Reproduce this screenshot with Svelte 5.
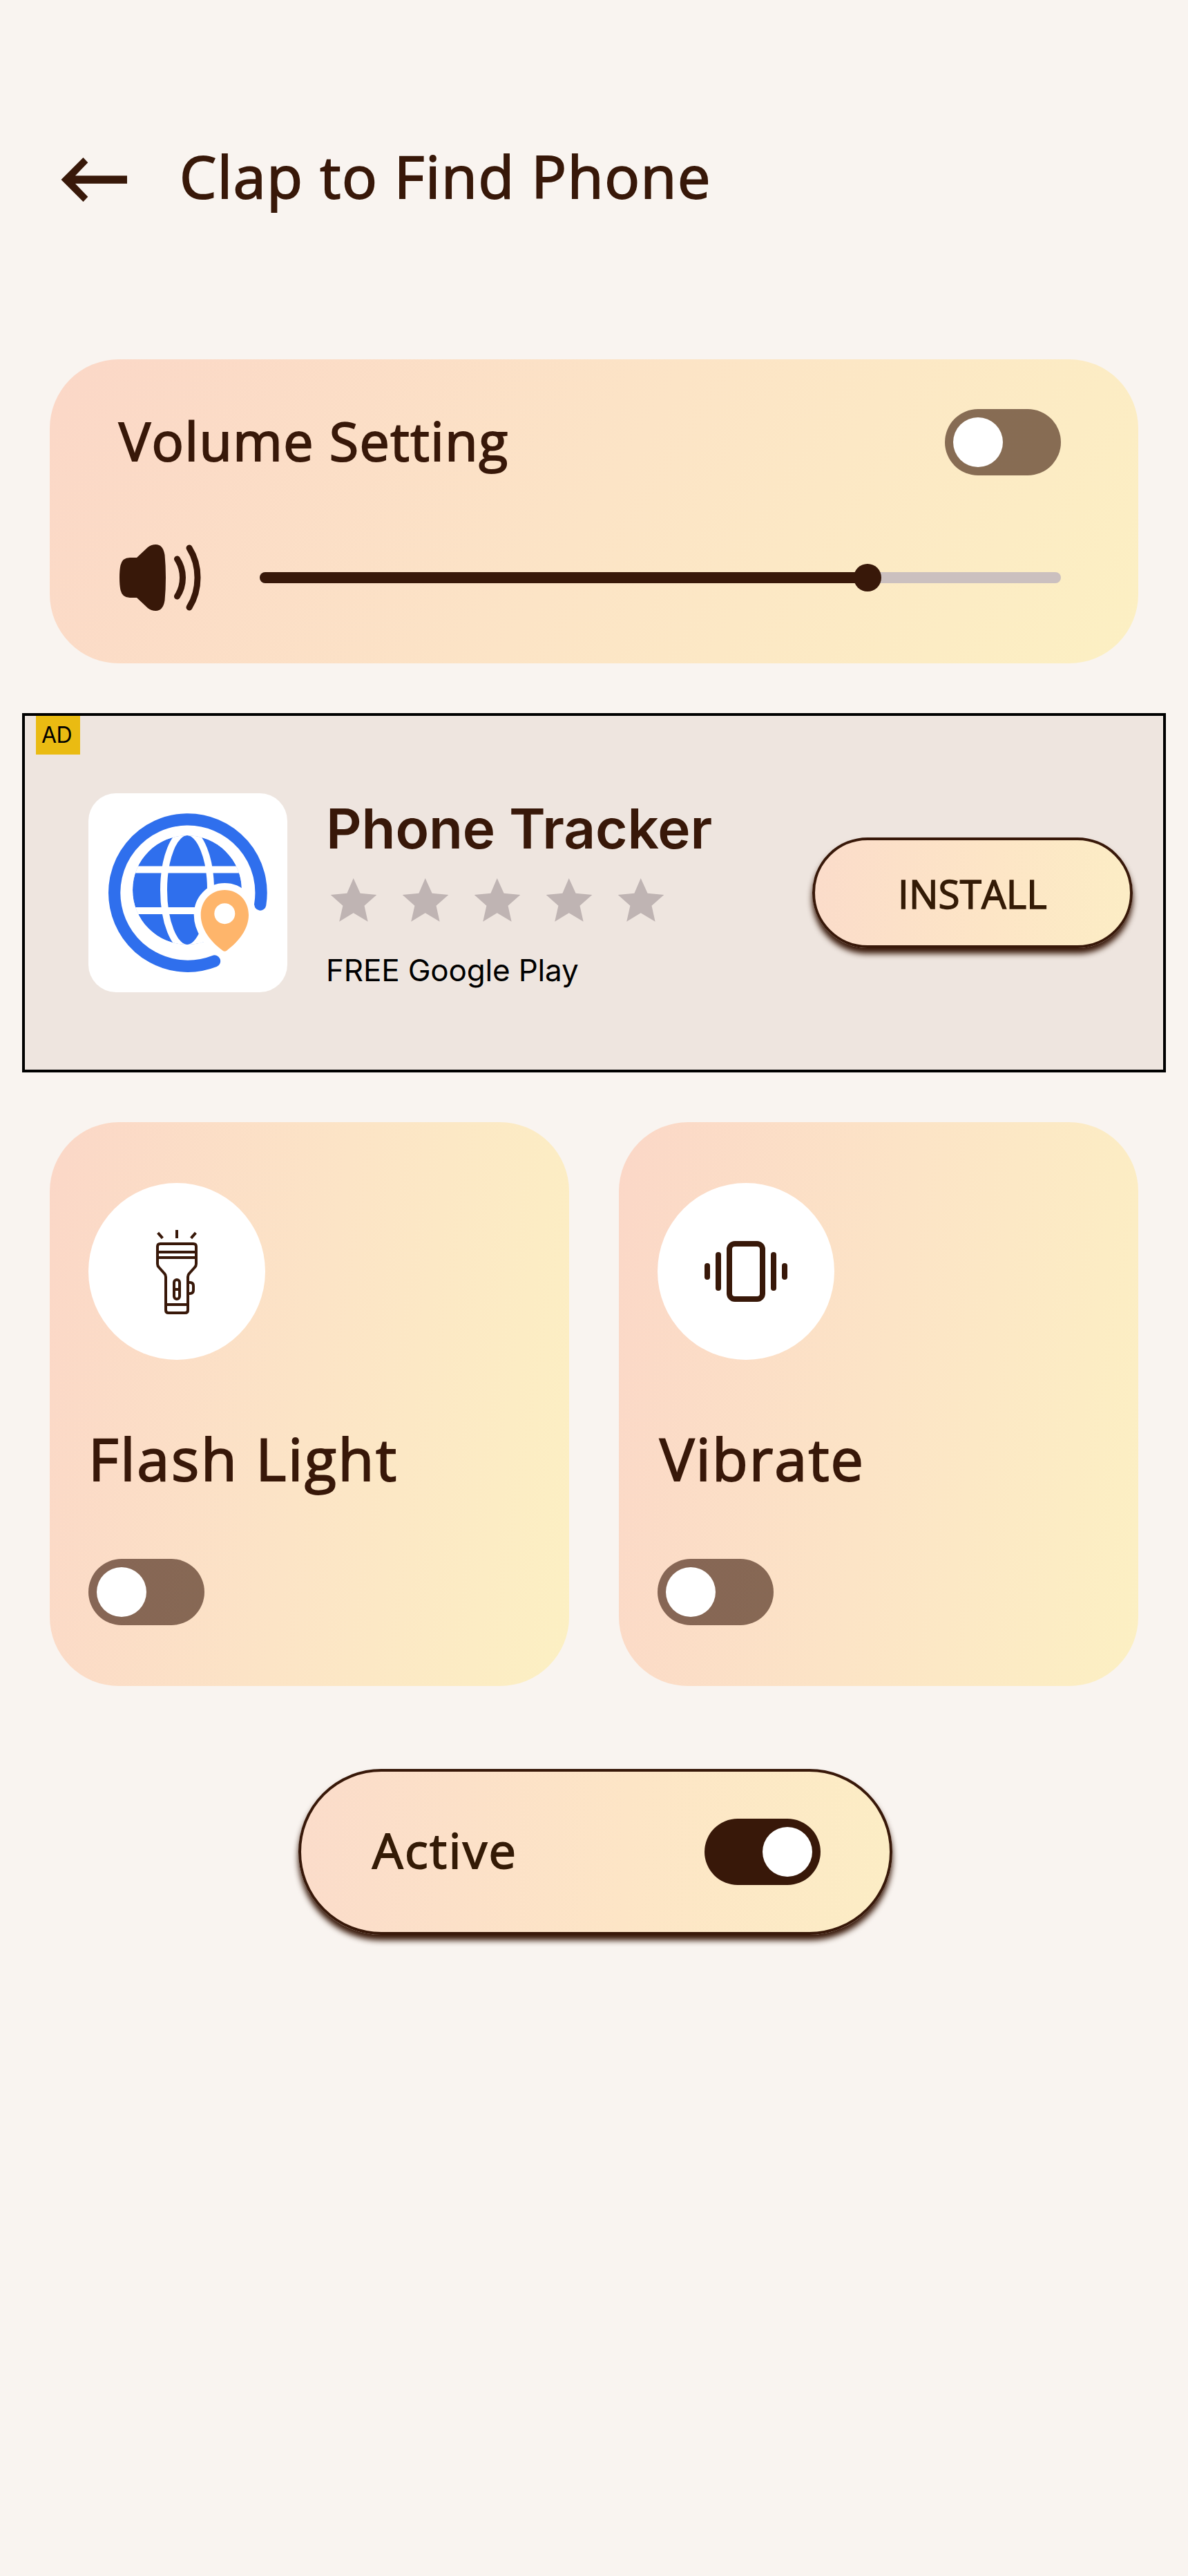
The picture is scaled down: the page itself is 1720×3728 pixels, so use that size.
<script>
  const stars = [0, 1, 2, 3, 4];
  const volume = 75.9;
</script>

{#snippet toggle(on)}
  <span class="toggle" class:on><span class="knob"></span></span>
{/snippet}

<main>
  <header>
    <svg class="back" viewBox="88 220 96 80" width="96" height="80">
      <path d="M88.5 260 120.5 228 127.3 235.3 109 254.2H184V265.8H109L127.3 284.7 120.5 292Z" />
    </svg>
    <h1>Clap to Find Phone</h1>
  </header>

  <section class="card volume">
    <div class="row">
      <h2>Volume Setting</h2>
      {@render toggle(false)}
    </div>
    <div class="row level">
      <svg viewBox="168 784 128 104" width="128" height="104">
        <path d="M198 807H188Q177 807 174.500 818Q173 825 173 836Q173 847 174.500 854Q177 865 188 865H198L214 880Q219 884 225.500 884Q236 884 238.500 869Q240 853 240 836Q240 819 238.500 803Q236 788 225.500 788Q219 788 214 792Z" />
        <g class="wave">
          <path d="M256.500 809Q264.500 821 264.500 836Q264.500 851 256.500 863" />
          <path d="M274 793Q286 812 286 836Q286 860 274 879" />
        </g>
      </svg>
      <div class="slider">
        <div class="fill" style="width: {volume}%"><span class="handle"></span></div>
      </div>
    </div>
  </section>

  <section class="ad">
    <span class="badge">AD</span>
    <svg class="logo" viewBox="0 0 288 288" width="288" height="288">
      <defs><clipPath id="globe"><circle cx="143" cy="140" r="79" /></clipPath></defs>
      <path class="ring" d="M248.700 161A106.200 106.200 0 1 0 182.500 243" />
      <g clip-path="url(#globe)">
        <circle class="blue" cx="143" cy="140" r="79" />
        <g class="mesh">
          <ellipse cx="143" cy="140" rx="34" ry="84" />
          <path d="M60 110.600H226M60 170H226" />
        </g>
        <path class="hole" d="M161 203 158 222H185V203Z" />
      </g>
      <path class="pin-edge" d="M197.300 140C217 140 232 155.500 232 176C232 197 217 215 200.500 227.500Q197.300 230 194.200 227.500C177.500 215 162.700 197 162.700 176C162.700 155.500 177.500 140 197.300 140Z" />
      <path class="pin" d="M197.300 140C217 140 232 155.500 232 176C232 197 217 215 200.500 227.500Q197.300 230 194.200 227.500C177.500 215 162.700 197 162.700 176C162.700 155.500 177.500 140 197.300 140Z" />
      <circle class="hole" cx="197.300" cy="174.200" r="15" />
    </svg>
    <div class="info">
      <h3>Phone Tracker</h3>
      <div class="stars">
        {#each stars as s (s)}
          <svg viewBox="0 0 80 80" width="80" height="80">
            <path d="M39.700 9 49.600 30.700 73.300 33 55.500 48.700 60.600 71.700 39.700 59.300 19.200 71.700 24.400 48.700 6.700 33 30.400 30.700Z" />
          </svg>
        {/each}
      </div>
      <p>FREE Google Play</p>
    </div>
    <button class="pill install">INSTALL</button>
  </section>

  <section class="tiles">
    <article class="card tile">
      <span class="disc">
        <svg viewBox="216 1776 80 128" width="80" height="128">
          <g class="thin">
            <path d="M256 1780V1792M228.600 1784.200 235.400 1791.800M283.400 1784.200 276.600 1791.800" />
            <path d="M232 1800H280Q284 1800 284 1804V1829Q284 1832 282 1834L274 1843Q272 1845 272 1848V1896Q272 1900 268 1900H244Q240 1900 240 1896V1848Q240 1845 238 1843L230 1834Q228 1832 228 1829V1804Q228 1800 232 1800Z" />
            <path d="M228 1812H284M228 1820H284M240 1888H272M252 1866H260" />
            <rect x="252" y="1852" width="8" height="28" rx="4" />
            <path d="M272 1856H275Q280 1856 280 1861V1867Q280 1872 275 1872H272" />
          </g>
        </svg>
      </span>
      <h2 class="big">Flash Light</h2>
      {@render toggle(false)}
    </article>
    <article class="card tile">
      <span class="disc">
        <svg viewBox="1016 1792 128 96" width="128" height="96">
          <rect class="phone" x="1056" y="1800" width="48" height="80" rx="8" />
          <rect x="1036" y="1812" width="8" height="56" rx="4" />
          <rect x="1116" y="1812" width="8" height="56" rx="4" />
          <rect x="1020" y="1828" width="8" height="24" rx="4" />
          <rect x="1132" y="1828" width="8" height="24" rx="4" />
        </svg>
      </span>
      <h2 class="big vibrate">Vibrate</h2>
      {@render toggle(false)}
    </article>
  </section>

  <div class="pill active">
    <span class="label">Active</span>
    {@render toggle(true)}
  </div>
</main>

<style>
  :global(body) { background: #f9f4f0; }
  main {
    box-sizing: border-box;
    min-height: 3728px;
    padding-top: 200px;
    background: #f9f4f0;
    color: #381809;
    font-family: 'Open Sans', sans-serif;
    font-weight: 500;
  }
  h1, h2, h3, p { margin: 0; font-weight: 500; white-space: nowrap; }
  /* Thickens the regular cut to a medium weight */
  h1, h2 { -webkit-text-stroke: 2px currentColor; }
  svg { display: block; flex: none; fill: #381809; }
  header { display: flex; align-items: center; height: 120px; padding-left: 88px; }
  h1 { padding: 0 0 11px 76px; font-size: 84.500px; line-height: 108px; letter-spacing: 1.600px; }
  .card { background: linear-gradient(99deg, #fbd7c7, #fce4c6 50%, #fcf0c3); border-radius: 100px; box-sizing: border-box; }
  .row { display: flex; align-items: center; justify-content: space-between; }
  .volume {
    height: 440px;
    margin: 200px 72px 0;
    padding: 72px 112px 72px 96px;
    background: linear-gradient(123deg, #fbd7c7, #fce4c6 50%, #fcf0c3);
  }
  h2 { padding: 0 0 6px 4px; font-size: 77.200px; line-height: 90px; letter-spacing: 1.500px; }
  .level { margin-top: 96px; gap: 80px; }
  .wave { fill: none; stroke: #381809; stroke-width: 9; stroke-linecap: round; }
  .slider { flex: 1; height: 16px; border-radius: 8px; background: #cbc0bf; }
  .fill { display: flex; align-items: center; justify-content: flex-end; height: 16px; border-radius: 8px; background: #381809; }
  .handle { width: 40px; height: 40px; flex: none; border-radius: 50%; margin-right: -20px; background: #381809; }
  .toggle {
    display: flex;
    flex: none;
    box-sizing: border-box;
    width: 168px;
    height: 96px;
    padding: 12px;
    border-radius: 48px;
    background: rgba(56, 24, 9, 0.6);
  }
  .toggle.on { justify-content: flex-end; background: #381809; }
  .knob { width: 72px; height: 72px; border-radius: 50%; background: #fff; }
  .ad {
    position: relative;
    display: flex;
    align-items: center;
    box-sizing: border-box;
    height: 520px;
    margin: 72px 32px 0;
    padding: 0 44px 0 92px;
    border: 4px solid #000;
    background: #eee5df;
    font-family: Inter, sans-serif;
  }
  .badge {
    position: absolute;
    top: 0;
    left: 16px;
    box-sizing: border-box;
    width: 64px;
    height: 56px;
    padding-left: 8px;
    background: #eabb12;
    color: #000;
    font-size: 32px;
    font-weight: 400;
    line-height: 56px;
    letter-spacing: -0.500px;
  }
  .logo { border-radius: 40px; background: #fff; }
  .ring { fill: none; stroke: #2f6fed; stroke-width: 17.300; stroke-linecap: round; }
  .blue { fill: #2f6fed; }
  .mesh { fill: none; stroke: #fff; stroke-width: 10; }
  .pin-edge { fill: #fff; stroke: #fff; stroke-width: 20; }
  .pin { fill: #feb56b; }
  .hole { fill: #fff; }
  .info { margin-left: 56px; }
  h3 { font-size: 80px; font-weight: 600; line-height: 94px; letter-spacing: -0.100px; }
  .stars { display: flex; gap: 24px; margin: 16px 0 34px; }
  .stars svg { fill: #bfb4b3; }
  p { color: #000; font-size: 44px; font-weight: 400; line-height: 56px; letter-spacing: -0.180px; }
  .pill {
    display: flex;
    align-items: center;
    box-sizing: border-box;
    border: 4px solid #381809;
    border-radius: 120px;
    background: linear-gradient(93deg, #fbdcca, #fde5c6 55%, #fcedc5);
    box-shadow: 0 8px 8px #381809;
    color: #341b06;
    font-family: 'Open Sans', sans-serif;
    font-weight: 500;
    -webkit-text-stroke: 1.500px currentColor;
  }
  .install { width: 464px; height: 160px; margin: 0 0 0 auto; padding: 3px 0 0; justify-content: center; font-size: 56.500px; letter-spacing: 0.100px; }
  .tiles { display: grid; grid-template-columns: 1fr 1fr; gap: 72px; margin: 72px 72px 0; }
  .tile { display: flex; flex-direction: column; align-items: flex-start; justify-content: space-between; height: 816px; padding: 88px 56px; }
  .disc { display: grid; place-items: center; width: 256px; height: 256px; border-radius: 50%; background: #fff; }
  .big { padding: 0 0 3px; font-size: 84.500px; line-height: 110px; letter-spacing: 2.700px; }
  .vibrate { padding-left: 3px; letter-spacing: 2.100px; }
  .thin, .phone { fill: none; stroke: #381809; stroke-width: 4; }
  .phone { stroke-width: 8; }
  .active {
    justify-content: space-between;
    width: 860px;
    height: 240px;
    margin: 120px 0 0 432px;
    padding: 0 100px 0 103px;
    font-size: 70.300px;
    line-height: 90px;
    letter-spacing: 2.500px;
  }
  .label { padding-bottom: 7px; -webkit-text-stroke: 1.800px currentColor; }
</style>
